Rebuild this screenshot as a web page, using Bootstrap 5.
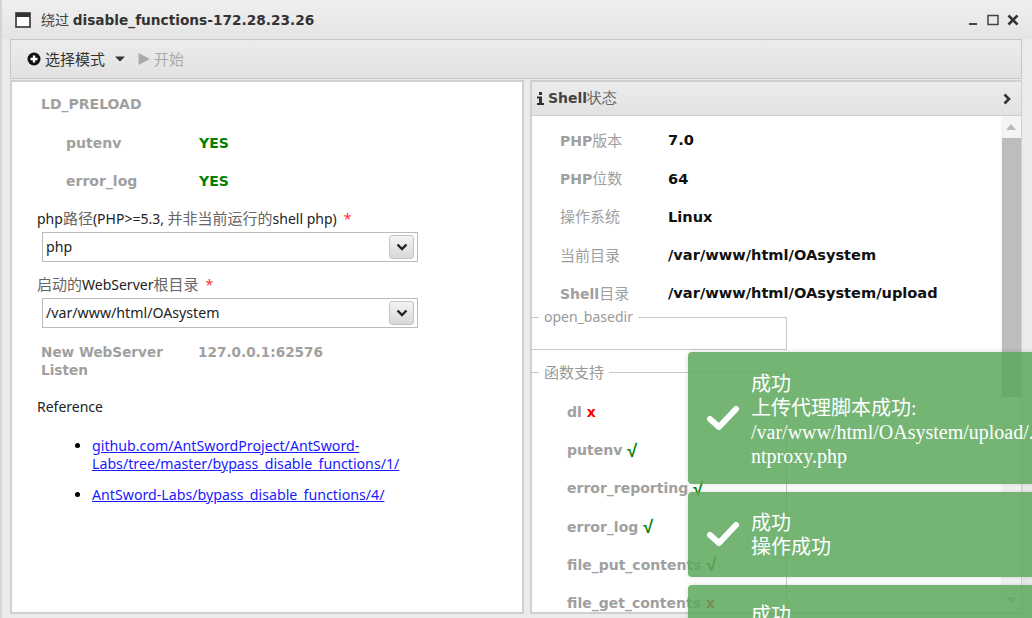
<!DOCTYPE html>
<html lang="zh">
<head>
<meta charset="utf-8">
<title>disable_functions</title>
<link href="https://cdn.jsdelivr.net/npm/bootstrap@5.3.0/dist/css/bootstrap.min.css" rel="stylesheet">
<style>
html,body{height:618px;overflow:hidden}
body{background:#ebebeb;font-family:"Noto Sans","Noto Sans CJK SC",sans-serif;font-size:14.2px;color:#000;position:relative}
.cj{font-size:15px;font-weight:400;color:#666}
.win-title{height:39px;padding:0 12px 0 13px;border-left:2px solid #d4d4d4;background:linear-gradient(#f0f0f0,#e4e4e4);gap:10px}
.win-title .ttl{font-size:14px;color:#444}
.win-title b{color:#333;font-family:"DejaVu Sans",sans-serif;font-size:13.7px}
.win-body{height:579px;padding:0 10px 0 8px;border-left:2px solid #d4d4d4}
.tool-bar{height:40px;border:1px solid #c8c8c8;background:linear-gradient(#ececec,#e2e2e2);padding-left:16px;gap:4px;font-size:15px;color:#333}
.tool-bar .off{color:#aaa;margin-left:-1px}
.panes{gap:6px;height:534px;margin-top:1px}
.pane{border:2px solid #d0d0d0;background:#fff;min-width:0;overflow:hidden}
.pane-l{width:514px;padding:0 0 0 25px}
.pane-r{width:492px;position:relative;border-right-width:1px}
.lbl{color:#a0a0a0;font-weight:700;font-size:14px;font-family:"DejaVu Sans",sans-serif}
.lbl-s{font-size:13.6px}
.kv{display:flex;min-height:38px;align-items:center}
.kv .k{width:133px;line-height:19px}
.yes{color:#008000;font-weight:700;font-family:"DejaVu Sans",sans-serif;font-size:14px}
.frm-lab{font-size:14px;line-height:20px;color:#222}
.req{color:#f33;margin-left:7px}
.sel{width:376px;height:30px;border:1px solid #bbb;margin-left:5px;padding:0 3px;color:#222;margin-top:3px}
.sel-btn{width:25px;height:24px;border:1px solid #c4c4c4;border-radius:3px;background:linear-gradient(#f4f4f4,#d8d8d8)}
.refs{padding-left:55px;margin:20px 0 0}
.refs li{line-height:18px;margin-bottom:13px;width:335px}
.refs a{color:#1a1aff}
.pane-head{height:34px;border-bottom:1px solid #ccc;background:linear-gradient(#ececec,#e2e2e2);padding:0 9px 0 5px;font-weight:700;font-size:14px;color:#444;font-family:"DejaVu Sans",sans-serif}
.scr{padding:5px 0 0 28px}
.info{display:flex;height:38.3px;align-items:center}
.info .k{width:108px;color:#a0a0a0;font-weight:700;font-size:14px;font-family:"DejaVu Sans","Noto Sans CJK SC",sans-serif}
.info .cj{font-family:"Noto Sans CJK SC",sans-serif;color:#a0a0a0}
.info .v{font-weight:700;color:#111;font-size:14.6px;font-family:"DejaVu Sans",sans-serif}
.fs{border:1px solid #c8c8c8;width:256px;margin:0;position:relative;left:-1px}
.fs-a{height:33px;margin-top:5px}
.fs-b{height:270px;margin-top:22px;border-bottom:0;padding-left:35px;padding-top:20px}
.fs-t{position:absolute;left:7px;top:-10px;background:#fff;padding:0 5px;font-size:14px;line-height:18px;color:#999}
.fs-t .cj{color:#999}
.fn{height:38.2px;display:flex;align-items:center;white-space:nowrap;color:#a0a0a0;font-weight:700;font-size:14px;gap:5px;font-family:"DejaVu Sans",sans-serif}
.no{color:#f00;font-weight:700}
.ok{color:#008000;font-weight:700;font-size:18px;line-height:1;font-family:"Liberation Sans",sans-serif}
.vbar{position:absolute;right:0;top:34px;bottom:0;width:20px;background:#f4f4f4}
.vthumb{position:absolute;left:1px;right:0;top:22px;height:259px;background:#bdbdbd}
.vdn{position:absolute;left:5px;bottom:9px}
.tst{position:absolute;left:688px;width:344px;background:rgba(92,168,92,.85);border-radius:4px 0 0 4px;color:#fff;font-family:"Liberation Serif","Noto Sans CJK SC",serif;font-size:20px;line-height:24px;box-shadow:0 0 5px rgba(0,0,0,.15);padding-left:63px;overflow:hidden}
.tst svg{position:absolute;left:18px}
.t1{top:352px;height:132px;padding-top:20px}
.t2{top:492px;height:85px;padding-top:19px}
.t3{top:585px;height:60px;padding-top:18px}
.t1 svg{top:52px}.t2 svg{top:28px}
.nw{white-space:nowrap}
</style>
</head>
<body>
<div class="win-title d-flex align-items-center">
  <svg width="16" height="16" viewBox="0 0 16 16"><rect x="1" y="1" width="14" height="14" fill="#fff" stroke="#333" stroke-width="1.6"/><rect x="1" y="1" width="14" height="4" fill="#333"/></svg>
  <span class="ttl">绕过 <b>disable_functions-172.28.23.26</b></span>
  <span class="ms-auto d-flex align-items-center" style="gap:6px">
    <svg width="14" height="14" viewBox="0 0 14 14"><rect x="3" y="10" width="8" height="2" fill="#444"/></svg>
    <svg width="14" height="14" viewBox="0 0 14 14"><rect x="2" y="2.500" width="10" height="9" fill="none" stroke="#444" stroke-width="1.500"/></svg>
    <svg width="14" height="14" viewBox="0 0 14 14"><path d="M2.500 2.500 11.500 11.500M11.500 2.500 2.500 11.500" stroke="#333" stroke-width="2.600"/></svg>
  </span>
</div>
<div class="win-body">
  <div class="tool-bar d-flex align-items-center">
    <svg width="14" height="14" viewBox="0 0 14 14"><circle cx="7" cy="7" r="6.500" fill="#111"/><path d="M3.500 7h7M7 3.500v7" stroke="#fff" stroke-width="2.400"/></svg>
    <span>选择模式</span>
    <svg style="margin-left:5px" width="12" height="8" viewBox="0 0 12 8"><path d="M1 1.500h10L6 6.500z" fill="#333"/></svg>
    <svg style="margin-left:7px" width="14" height="14" viewBox="0 0 14 14"><path d="M1.500 1v12L13 7z" fill="#aaa"/></svg>
    <span class="off">开始</span>
  </div>
  <div class="panes d-flex">
    <div class="pane pane-l">
      <div class="lbl ps-1" style="height:43px;padding-top:15px;line-height:14px">LD_PRELOAD</div>
      <div style="margin-top:-1px;padding-left:29px">
        <div class="kv" style="padding-top:1px"><span class="k lbl">putenv</span><span class="yes">YES</span></div>
        <div class="kv"><span class="k lbl">error_log</span><span class="yes">YES</span></div>
      </div>
      <div class="frm-lab" style="margin-top:8px">php<span class="cj">路径</span>(PHP&gt;=5.3, <span class="cj">并非当前运行的</span>shell php)<span class="req">*</span></div>
      <div class="sel d-flex align-items-center justify-content-between"><span>php</span><span class="sel-btn d-flex align-items-center justify-content-center"><svg width="12" height="8" viewBox="0 0 12 8"><path d="M1.500 1.500 6 6l4.500-4.500" fill="none" stroke="#222" stroke-width="2.400"/></svg></span></div>
      <div class="frm-lab" style="margin-top:12px"><span class="cj">启动的</span>WebServer<span class="cj">根目录</span><span class="req">*</span></div>
      <div class="sel d-flex align-items-center justify-content-between"><span>/var/www/html/OAsystem</span><span class="sel-btn d-flex align-items-center justify-content-center"><svg width="12" height="8" viewBox="0 0 12 8"><path d="M1.500 1.500 6 6l4.500-4.500" fill="none" stroke="#222" stroke-width="2.400"/></svg></span></div>
      <div class="d-flex ps-1" style="margin-top:15px;line-height:18px"><span class="lbl lbl-s" style="width:157px">New WebServer<br>Listen</span><span class="lbl lbl-s">127.0.0.1:62576</span></div>
      <div class="frm-lab" style="margin-top:18px">Reference</div>
      <ul class="refs">
        <li><a href="#">github.com/AntSwordProject/AntSword-Labs/tree/master/bypass_disable_functions/1/</a></li>
        <li><a href="#">AntSword-Labs/bypass_disable_functions/4/</a></li>
      </ul>
    </div>
    <div class="pane pane-r">
      <div class="pane-head d-flex align-items-center justify-content-between">
        <span class="d-flex align-items-center"><svg class="me-1" width="7" height="13" viewBox="0 0 7 13"><path d="M2 0h3v3H2zM0 4.500h5v6.500h2v2H0v-2h2V6.500H0z" fill="#333"/></svg><span>Shell<span class="cj">状态</span></span></span>
        <svg width="10" height="12" viewBox="0 0 10 12"><path d="M2.500 1.500 7 6l-4.500 4.500" fill="none" stroke="#333" stroke-width="2.600"/></svg>
      </div>
      <div class="scr">
        <div class="info"><span class="k">PHP<span class="cj">版本</span></span><span class="v">7.0</span></div>
        <div class="info"><span class="k">PHP<span class="cj">位数</span></span><span class="v">64</span></div>
        <div class="info"><span class="k"><span class="cj">操作系统</span></span><span class="v">Linux</span></div>
        <div class="info"><span class="k"><span class="cj">当前目录</span></span><span class="v">/var/www/html/OAsystem</span></div>
        <div class="info"><span class="k">Shell<span class="cj">目录</span></span><span class="v">/var/www/html/OAsystem/upload</span></div>
      </div>
      <div class="fs fs-a"><span class="fs-t">open_basedir</span></div>
      <div class="fs fs-b"><span class="fs-t"><span class="cj">函数支持</span></span>
        <div class="fn">dl <span class="no">x</span></div>
        <div class="fn">putenv <span class="ok">√</span></div>
        <div class="fn">error_reporting <span class="ok">√</span></div>
        <div class="fn">error_log <span class="ok">√</span></div>
        <div class="fn">file_put_contents <span class="ok">√</span></div>
        <div class="fn">file_get_contents <span class="no">x</span></div>
      </div>
      <div class="vbar"><svg class="d-block mx-auto mt-2" width="10" height="6" viewBox="0 0 10 6"><path d="M0 6h10L5 0z" fill="#bbb"/></svg><div class="vthumb"></div><svg class="vdn" width="10" height="6" viewBox="0 0 10 6"><path d="M0 0h10L5 6z" fill="#bbb"/></svg></div>
    </div>
  </div>
</div>
<div class="tst t1"><svg width="34" height="28" viewBox="0 0 34 28"><path d="M4 15 13 23 30 5" fill="none" stroke="#fff" stroke-width="6" stroke-linecap="round" stroke-linejoin="round"/></svg>成功<br>上传代理脚本成功:<br><span class="nw">/var/www/html/OAsystem/upload/.a</span><br>ntproxy.php</div>
<div class="tst t2"><svg width="34" height="28" viewBox="0 0 34 28"><path d="M4 15 13 23 30 5" fill="none" stroke="#fff" stroke-width="6" stroke-linecap="round" stroke-linejoin="round"/></svg>成功<br>操作成功</div>
<div class="tst t3">成功</div>
</body>
</html>
